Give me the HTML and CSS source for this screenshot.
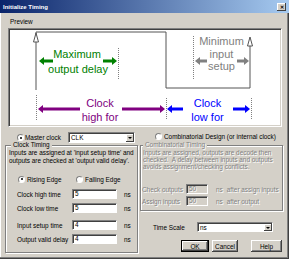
FILE: index.html
```html
<!DOCTYPE html>
<html lang="en">
<head>
  <meta charset="UTF-8">
  <title>Initialize Timing</title>
  <link rel="stylesheet" href="styles.css">
</head>
<body>

  <div class="window">
    <div class="titlebar">
      <span class="title">Initialize Timing</span>
      <span class="close-btn">&#x2715;</span>
    </div>

    <div class="preview-label">Preview</div>
    <div class="preview">
      <svg class="diagram" width="272" height="97" viewBox="9 29 272 97">
        <!-- clock waveform -->
        <polyline points="36,90 36,32 166,32 166,88 250,88 250,40" fill="none" stroke="#555" stroke-width="1"/>
        <polygon points="36,33 33.5,42 38.5,42" fill="#fff" stroke="#555"/>
        <polygon points="250,37 247.5,46 252.5,46" fill="#fff" stroke="#555"/>

        <!-- dotted markers -->
        <g stroke="#808080" stroke-dasharray="1 1">
          <line x1="118.5" y1="48" x2="118.5" y2="80"/>
          <line x1="193.5" y1="36" x2="193.5" y2="80"/>
          <line x1="36.5" y1="95" x2="36.5" y2="120"/>
          <line x1="166.5" y1="98" x2="166.5" y2="120"/>
          <line x1="251.5" y1="98" x2="251.5" y2="120"/>
        </g>

        <!-- maximum output delay -->
        <polygon fill="#008000" points="39,61 44,57 44,59.5 53,59.5 53,62.5 44,62.5 44,65"/>
        <polygon fill="#008000" points="117,61 112,57 112,59.5 103,59.5 103,62.5 112,62.5 112,65"/>
        <text class="lbl" x="77" y="58" fill="#008000">Maximum</text>
        <text class="lbl" x="78" y="72.5" fill="#008000">output delay</text>

        <!-- minimum input setup -->
        <polygon fill="#808080" points="195,61 200,57 200,59.5 207,59.5 207,62.5 200,62.5 200,65"/>
        <polygon fill="#808080" points="249,61 244,57 244,59.5 237,59.5 237,62.5 244,62.5 244,65"/>
        <text class="lbl" x="221.5" y="45" fill="#808080">Minimum</text>
        <text class="lbl" x="221.5" y="57.5" fill="#808080">input</text>
        <text class="lbl" x="221.5" y="70" fill="#808080">setup</text>

        <!-- clock high -->
        <polygon fill="#800080" points="38,109 43,105 43,107.5 80,107.5 80,110.5 43,110.5 43,113"/>
        <polygon fill="#800080" points="165,109 160,105 160,107.5 122,107.5 122,110.5 160,110.5 160,113"/>
        <text class="lbl" x="100" y="107" fill="#800080">Clock</text>
        <text class="lbl" x="100" y="121" fill="#800080">high for</text>

        <!-- clock low -->
        <polygon fill="#0000ff" points="167,109 172,105 172,107.5 183,107.5 183,110.5 172,110.5 172,113"/>
        <polygon fill="#0000ff" points="250,109 245,105 245,107.5 233,107.5 233,110.5 245,110.5 245,113"/>
        <text class="lbl" x="207.5" y="107" fill="#0000ff">Clock</text>
        <text class="lbl" x="207.5" y="121" fill="#0000ff">low for</text>
      </svg>
    </div>

    <div class="lower">
      <div class="col-left">
        <div class="choice-row master-row">
          <span class="radio checked"></span>
          <span>Master clock</span>
          <div class="combo clk-combo">
            <span class="combo-value">CLK</span>
            <span class="combo-btn"></span>
          </div>
        </div>

        <fieldset class="group clock-group">
          <legend>Clock Timing</legend>
          <p class="note">Inputs are assigned at 'input setup time' and<br>outputs are checked at 'output valid delay'.</p>
          <div class="edge-row">
            <span class="radio-label rising"><span class="radio checked"></span>Rising Edge</span>
            <span class="radio-label"><span class="radio"></span>Falling Edge</span>
          </div>
          <div class="field-row r1"><span class="field-name">Clock high time</span><span class="textbox">5</span><span class="unit">ns</span></div>
          <div class="field-row r2"><span class="field-name">Clock low time</span><span class="textbox">5</span><span class="unit">ns</span></div>
          <div class="field-row r3"><span class="field-name">Input setup time</span><span class="textbox">4</span><span class="unit">ns</span></div>
          <div class="field-row r2"><span class="field-name">Output valid delay</span><span class="textbox">4</span><span class="unit">ns</span></div>
        </fieldset>
      </div>

      <div class="col-right">
        <div class="choice-row comb-row">
          <span class="radio"></span>
          <span>Combinatorial Design (or internal clock)</span>
        </div>

        <fieldset class="group comb-group disabled">
          <legend>Combinatorial Timing</legend>
          <p class="note">Inputs are assigned, outputs are decode then<br>checked.  A delay between inputs and outputs<br>avoids assignment/checking conflicts.</p>
          <div class="comb-row-field first"><span class="comb-name">Check outputs</span><span class="textbox off">50</span><span class="unit">ns</span><span class="after">after assign inputs</span></div>
          <div class="comb-row-field"><span class="comb-name">Assign inputs</span><span class="textbox off">50</span><span class="unit">ns</span><span class="after">after output</span></div>
        </fieldset>

        <div class="scale-row">
          <span class="scale-name">Time Scale</span>
          <div class="combo scale-combo">
            <span class="combo-value">ns</span>
            <span class="combo-btn"></span>
          </div>
        </div>

        <div class="button-row">
          <button class="btn default">OK</button>
          <button class="btn">Cancel</button>
          <button class="btn help">Help</button>
        </div>
      </div>
    </div>
  </div>

</body>
</html>
```

FILE: styles.css
```css
body {
  margin: 0;
  font-family: "Liberation Sans", Arial, sans-serif;
  font-size: 6.4px;
  color: #000;
  background-color: #d4d0c8;
}

.window {
  width: 289px;
  height: 259px;
  background-color: #d4d0c8;
  box-shadow: inset -1px -1px #404040, inset -2px -2px #808080, inset 1px 0 #fff;
  overflow: hidden;
}

.titlebar {
  height: 13px;
  display: flex;
  align-items: center;
  justify-content: space-between;
  padding: 0 3px;
  background: linear-gradient(to right, #0a246a, #a6caf0);
}

.title {
  color: #fff;
  font-weight: bold;
  font-size: 6px;
}

.close-btn {
  width: 9px;
  height: 8px;
  background-color: #d4d0c8;
  box-shadow: inset -1px -1px #404040, inset 1px 1px #fff;
  font-size: 5px;
  line-height: 8px;
  text-align: center;
  font-weight: bold;
}

.preview-label {
  padding: 5px 0 0 10px;
  line-height: 8px;
}

.preview {
  margin: 2px 0 0 8px;
  width: 274px;
  height: 99px;
  box-sizing: border-box;
  background-color: #fff;
  border: 1px solid;
  border-color: #808080 #fff #fff #808080;
  box-shadow: inset 1px 1px #404040, inset -1px -1px #d4d0c8;
}

.diagram {
  display: block;
}

.lbl {
  font-family: "Liberation Sans", Arial, sans-serif;
  font-size: 11px;
  text-anchor: middle;
}

.lower {
  display: grid;
  grid-template-columns: 133px 143px;
  column-gap: 2px;
  padding-left: 5px;
}

/* radios */
.radio {
  width: 7px;
  height: 7px;
  box-sizing: border-box;
  border-radius: 50%;
  background-color: #fff;
  border: 1px solid;
  border-color: #808080 #fff #fff #808080;
  display: inline-flex;
  align-items: center;
  justify-content: center;
  flex-shrink: 0;
}

.radio.checked::after {
  content: "";
  width: 2px;
  height: 2px;
  border-radius: 50%;
  background-color: #000;
}

.choice-row {
  display: flex;
  align-items: center;
  gap: 1px;
}

.master-row {
  padding: 5px 3px 0 12px;
  height: 11px;
}

.comb-row {
  padding: 5px 0 0 15px;
  height: 8px;
  gap: 2px;
}

/* combo boxes */
.combo {
  display: flex;
  height: 11px;
  box-sizing: border-box;
  background-color: #fff;
  border: 1px solid;
  border-color: #808080 #fff #fff #808080;
  box-shadow: inset 1px 1px #404040;
}

.combo-value {
  flex: 1;
  padding: 1px 0 0 2px;
  line-height: 8px;
}

.combo-btn {
  width: 8px;
  margin: 1px 0 0 0;
  background-color: #d4d0c8;
  box-shadow: inset -1px -1px #404040, inset 1px 1px #fff;
  display: flex;
  align-items: center;
  justify-content: center;
}

.combo-btn::after {
  content: "";
  border-left: 2px solid transparent;
  border-right: 2px solid transparent;
  border-top: 2px solid #000;
}

.clk-combo {
  width: 67px;
  margin-left: auto;
}

/* group boxes */
.group {
  margin: 0;
  padding: 0 3px;
  min-width: 0;
  box-sizing: border-box;
  border: 1px solid #808080;
  box-shadow: inset 1px 1px #fff, 1px 1px #fff;
}

.group legend {
  padding: 0 2px;
  line-height: 8px;
  background-color: #d4d0c8;
}

.clock-group {
  margin-top: -2px;
  height: 112px;
}

.clock-group legend {
  margin-left: 2px;
}

.comb-group {
  margin-top: 1px;
  height: 70px;
  padding: 0 2px;
}

.note {
  margin: 0;
  line-height: 7.5px;
  white-space: nowrap;
}

.comb-group .note {
  line-height: 7px;
  white-space: pre;
}

.disabled,
.disabled legend {
  color: #808080;
  text-shadow: 1px 1px #fff;
}

.edge-row {
  display: flex;
  align-items: center;
  margin-top: 11px;
  height: 8px;
  padding-left: 9px;
}

.radio-label {
  display: flex;
  align-items: center;
  gap: 2px;
}

.radio-label.rising {
  width: 58px;
}

.field-row {
  display: flex;
  align-items: center;
  height: 10px;
  margin-top: 4px;
  padding-left: 8px;
}

.field-row.r1 {
  margin-top: 6px;
}

.field-row.r3 {
  margin-top: 7px;
}

.field-name {
  width: 55px;
}

.textbox {
  width: 45px;
  height: 10px;
  box-sizing: border-box;
  background-color: #fff;
  border: 1px solid;
  border-color: #808080 #fff #fff #808080;
  box-shadow: inset 1px 1px #404040;
  padding-left: 2px;
  line-height: 8px;
  text-shadow: none;
  color: #000;
}

.unit {
  margin-left: 7px;
}

.comb-row-field {
  display: flex;
  align-items: center;
  height: 10px;
  margin-top: 2px;
  white-space: nowrap;
}

.comb-row-field.first {
  margin-top: 14px;
}

.comb-name {
  width: 44px;
  margin-left: -1px;
}

.textbox.off {
  width: 22px;
  background-color: #d4d0c8;
  color: #808080;
  text-shadow: 1px 1px #fff;
}

.comb-row-field .unit {
  margin-left: 8px;
}

.after {
  margin-left: 4px;
}

.scale-row {
  display: flex;
  align-items: center;
  margin-top: 11px;
  padding-left: 13px;
  height: 10px;
}

.scale-name {
  width: 44px;
}

.scale-combo {
  width: 76px;
  height: 10px;
}

.scale-combo .combo-value {
  line-height: 7px;
}

.button-row {
  display: flex;
  margin-top: 8px;
  padding-left: 41px;
  gap: 3px;
}

.btn {
  width: 26px;
  height: 12px;
  padding: 0;
  font-family: "Liberation Sans", Arial, sans-serif;
  font-size: 6.4px;
  color: #000;
  background-color: #d4d0c8;
  border: none;
  box-shadow: inset -1px -1px #404040, inset 1px 1px #fff, inset -2px -2px #808080;
}

.btn.default {
  width: 28px;
  box-shadow: inset 0 0 0 1px #000, inset -2px -2px #404040, inset 2px 2px #fff, inset -3px -3px #808080;
}

.btn.help {
  width: 31px;
  margin-left: 10px;
}
```
